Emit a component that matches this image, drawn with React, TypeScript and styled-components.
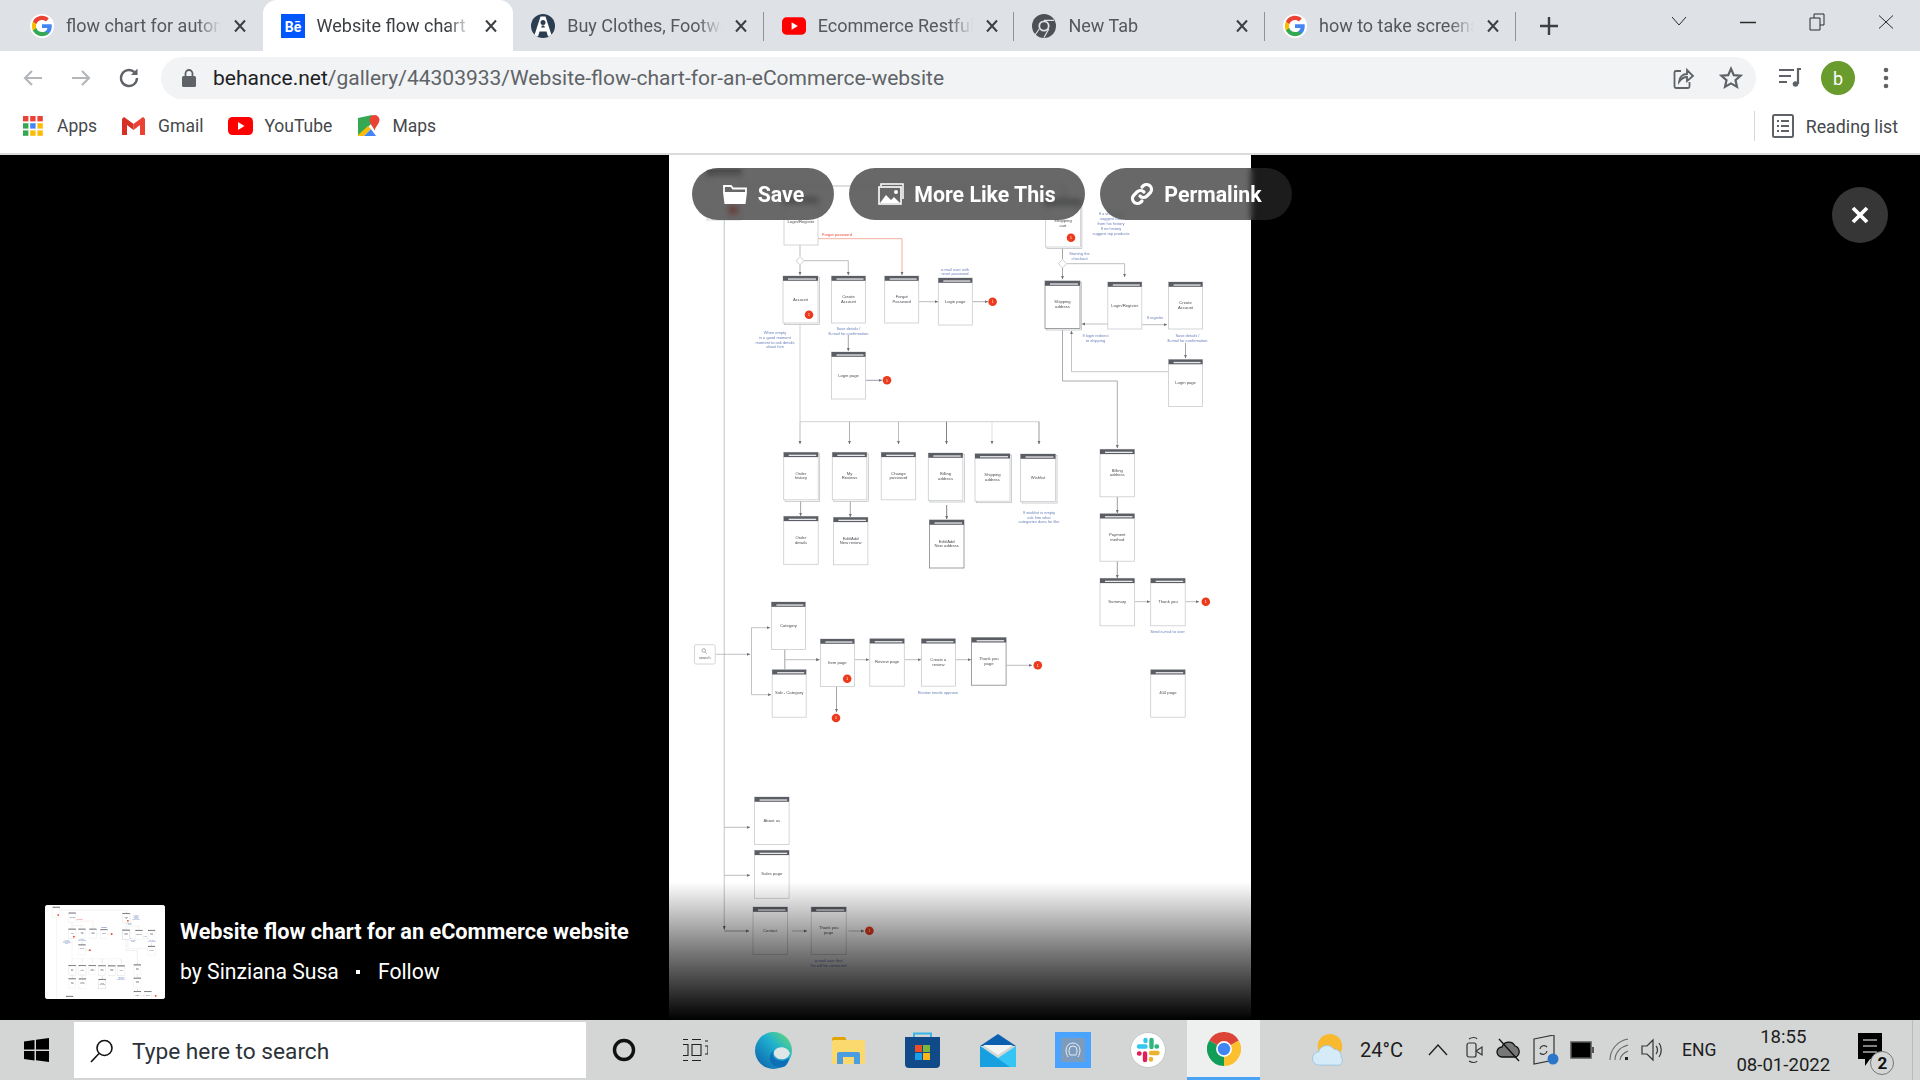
import React from "react";
import styled, { createGlobalStyle } from "styled-components";

const Global = createGlobalStyle`
  html, body { margin: 0; padding: 0; background: #000; }
  * { box-sizing: border-box; }
  body { font-family: Roboto, "Liberation Sans", sans-serif; }
`;

const Page = styled.div`
  width: 1920px; height: 1080px; display: flex; flex-direction: column; overflow: hidden; position: relative;
`;
const TabStrip = styled.div`
  height: 51px; background: #dee1e6; display: flex; align-items: center; padding-left: 12px; flex: none;
`;
const Tab = styled.div<{ $active?: boolean; $sep?: boolean }>`
  width: 250.6px; height: 51px; flex: none; display: flex; align-items: center; padding-left: 18px; gap: 12px;
  position: relative; color: ${p => (p.$active ? "#3c4043" : "#55585c")};
  background: ${p => (p.$active ? "#fff" : "transparent")};
  border-radius: ${p => (p.$active ? "14px 14px 0 0" : "0")};
  &::after {
    content: ""; display: ${p => (p.$sep ? "block" : "none")}; position: absolute; right: 0; top: 12px; width: 1px; height: 29px; background: #8f9397;
  }
`;
const TabIcon = styled.span`
  width: 24px; height: 24px; flex: none; display: flex; align-items: center; justify-content: center;
`;
const TabTitle = styled.span`
  width: 155px; flex: none; font-size: 18px; white-space: nowrap; overflow: hidden;
  mask-image: linear-gradient(to right, #000 84%, transparent 100%);
`;
const TabClose = styled.svg`
  width: 14px; height: 14px; flex: none; stroke: #3c4043; stroke-width: 2; fill: none;
`;
const NewTab = styled.svg`
  width: 24px; height: 24px; margin-left: 21px; flex: none; stroke: #3c4043; stroke-width: 2.4; fill: none;
`;
const WinControls = styled.div`
  margin-left: auto; display: flex; height: 44px; align-self: flex-start; flex: none;
`;
const WinBtn = styled.div`
  width: 69px; height: 44px; display: flex; align-items: center; justify-content: center;
  svg { fill: none; stroke: #2a2a2a; stroke-width: 1; width: 18px; height: 18px; }
`;
const Toolbar = styled.div`
  height: 51px; background: #fff; display: flex; align-items: center; padding: 3px 0 0 9px; flex: none;
`;
const NavBtn = styled.div`
  width: 48px; height: 48px; flex: none; display: flex; align-items: center; justify-content: center;
`;
const Address = styled.div`
  width: 1595px; height: 42px; margin-left: 8px; margin-right: 10px; border-radius: 21px; background: #f1f3f4; display: flex; align-items: center;
  padding-left: 21px; padding-right: 1px; flex: none;
`;
const UrlText = styled.div`
  margin-left: 17px; font-size: 21px; color: #5f6368; white-space: nowrap; flex: 1;
  b { font-weight: 400; color: #202124; }
`;
const AddrIcon = styled.span`
  width: 48px; display: flex; justify-content: center; align-items: center; flex: none;
`;
const Avatar = styled.div`
  width: 34px; height: 34px; border-radius: 50%; background: #6a9c2d; color: #fff; font-size: 18px;
  display: flex; align-items: center; justify-content: center;
`;
const Bookmarks = styled.div`
  height: 51px; background: #fff; display: flex; align-items: center; padding: 0 0 3px 23px; flex: none; color: #45484c; font-size: 17.5px;
`;
const Bookmark = styled.div<{ $ml?: number; $gap: number }>`
  display: flex; align-items: center; gap: ${p => p.$gap}px; margin-left: ${p => p.$ml ?? 0}px; flex: none;
`;
const ReadingList = styled.div`
  margin-left: auto; margin-right: 22px; display: flex; align-items: center; gap: 12px; border-left: 1px solid #d5d7da; height: 30px; padding-left: 17px; flex: none;
  font-size: 17.8px;
`;
const Divider = styled.div`
  height: 2px; background: #dcdcdc; flex: none;
`;
const Stage = styled.div`
  flex: 1; position: relative; background: #000; display: flex; justify-content: center; overflow: hidden;
`;
const ChartBox = styled.div`
  width: 582px; height: 865px; background: #fff; flex: none; display: flex;
`;
const Fade = styled.div`
  position: absolute; left: 0; right: 0; bottom: 0; height: 138px;
  background: linear-gradient(to bottom, rgba(0,0,0,0), rgba(0,0,0,.5) 48%, #000 100%);
`;
const Actions = styled.div`
  position: absolute; top: 13px; left: 692px; display: flex; gap: 15px; align-items: center;
`;
const ActionBtn = styled.div<{ $w: number }>`
  width: ${p => p.$w}px; height: 52px; border-radius: 26px; background: rgba(40,40,40,.7); backdrop-filter: blur(3px);
  display: flex; align-items: center; justify-content: center; gap: 10px; color: #fff; font-weight: 700; font-size: 21.3px;
`;
const CloseBtn = styled.div`
  position: absolute; left: 1832px; top: 32px; width: 56px; height: 56px; border-radius: 50%; background: #363636;
  display: flex; align-items: center; justify-content: center;
`;
const Caption = styled.div`
  position: absolute; left: 45px; top: 750px; display: flex; gap: 15px; align-items: center; color: #fff;
`;
const Thumb = styled.div`
  width: 120px; height: 94px; background: #fff; border-radius: 3px; overflow: hidden; flex: none; display: flex;
`;
const CapText = styled.div`
  display: flex; flex-direction: column; gap: 14px;
`;
const CapTitle = styled.div`
  font-size: 21.7px; font-weight: 700; line-height: 26px; white-space: nowrap;
`;
const CapSub = styled.div`
  font-size: 21.2px; line-height: 26px; display: flex; align-items: center; white-space: nowrap;
  i { width: 4px; height: 4px; background: #fff; margin: 0 18px 0 17px; display: block; }
`;
const Taskbar = styled.div`
  height: 60px; background: #d3d6d5; display: flex; align-items: center; flex: none; position: relative;
`;
const Start = styled.div`
  width: 74px; padding-right: 2px; display: flex; justify-content: center; flex: none;
`;
const SearchBox = styled.div`
  width: 512px; height: 56px; background: #fff; display: flex; align-items: center; padding: 2px 0 0 16px; gap: 18px; flex: none;
  color: #2c3238; font-size: 22.7px;
`;
const Slot = styled.div<{ $w?: number; $ml?: number }>`
  width: ${p => p.$w ?? 60}px; margin-left: ${p => p.$ml ?? 0}px; flex: none; display: flex; align-items: center; justify-content: center; height: 60px;
`;
const ActiveSlot = styled(Slot)`
  background: #eef0ef; border-bottom: 3px solid #4aa3f5;
`;
const AppSquare = styled.div`
  width: 36px; height: 36px; background: #4aa3ff; display: flex; align-items: center; justify-content: center;
`;
const AppInner = styled.div`
  width: 24px; height: 24px; background: #7d9cbd; display: flex; align-items: center; justify-content: center;
`;
const TrayText = styled.div<{ $ml: number; $fs?: number }>`
  margin-left: ${p => p.$ml}px; font-size: ${p => p.$fs ?? 20}px; color: #1d1d1d; flex: none; white-space: nowrap;
`;
const Clock = styled.div`
  margin-left: 20px; padding-top: 2px; width: 94px; display: flex; flex-direction: column; align-items: center; gap: 7px; font-size: 18.6px; color: #1d1d1d; flex: none; line-height: 21px;
`;
const Notify = styled.div`
  position: relative; width: 24px; height: 34px; margin-left: 28px; flex: none;
`;
const NotifyBadge = styled.div`
  position: absolute; left: 12px; top: 18px; width: 24px; height: 24px; border-radius: 50%; background: #d3d6d5; border: 1px solid #777;
  font-size: 17px; font-weight: 700; display: flex; align-items: center; justify-content: center; color: #111;
`;
const EdgeLine = styled.div`
  position: absolute; right: 7px; top: 0; bottom: 0; width: 1px; background: #b9bcbb;
`;

const G = ({ s = 24 }: { s?: number }) => (
  <svg width={s} height={s} viewBox="-1 -1 26 26">
    <circle cx="12" cy="12" r="13" fill="#fff" />
    <path fill="#4285F4" d="M22.56 12.25c0-.78-.07-1.53-.2-2.25H12v4.26h5.92c-.26 1.37-1.04 2.53-2.21 3.31v2.77h3.57c2.08-1.92 3.28-4.74 3.28-8.09z" />
    <path fill="#34A853" d="M12 23c2.97 0 5.46-.98 7.28-2.66l-3.57-2.77c-.98.66-2.23 1.06-3.71 1.06-2.86 0-5.29-1.93-6.16-4.53H2.18v2.84C3.99 20.53 7.7 23 12 23z" />
    <path fill="#FBBC05" d="M5.84 14.09c-.22-.66-.35-1.36-.35-2.09s.13-1.43.35-2.09V7.07H2.18C1.43 8.55 1 10.22 1 12s.43 3.45 1.18 4.93l3.66-2.84z" />
    <path fill="#EA4335" d="M12 5.38c1.62 0 3.06.56 4.21 1.64l3.15-3.15C17.45 2.09 14.97 1 12 1 7.7 1 3.99 3.47 2.18 7.07l3.66 2.84c.87-2.6 3.3-4.53 6.16-4.53z" />
  </svg>
);
const BeIcon = () => (
  <svg width="24" height="24" viewBox="0 0 24 24">
    <rect width="24" height="24" fill="#0057ff" />
    <text x="12" y="17.5" textAnchor="middle" fill="#fff" fontFamily="Roboto" fontWeight="700" fontSize="14">Bē</text>
  </svg>
);
const AnthroIcon = () => (
  <svg width="24" height="24" viewBox="0 0 24 24">
    <circle cx="12" cy="12" r="12" fill="#2b3d50" />
    <path fill="#fff" fillRule="evenodd" d="M9.5 2.5h5L20.5 21l-3.5 1.5-1.500-5h-7l-1.500 5L3.500 21zM12 6a2.500 2.500 0 0 0 0 5 2.500 2.500 0 0 0 0-5zM10 13.500h4l-1-2h-2z" />
  </svg>
);
const YT = ({ w = 25, h = 18 }: { w?: number; h?: number }) => (
  <svg width={w} height={h} viewBox="0 0 25 18">
    <rect width="25" height="18" rx="4.5" fill="#f00" />
    <path fill="#fff" d="M10 5l6.5 4-6.5 4z" />
  </svg>
);
const ChromeMono = () => (
  <svg width="24" height="24" viewBox="0 0 24 24">
    <circle cx="12" cy="12" r="12" fill="#4d5054" />
    <circle cx="12" cy="12" r="5.6" fill="#dee1e6" />
    <circle cx="12" cy="12" r="3.8" fill="#4d5054" />
    <path d="M12 6.4h10M7.2 15l-4.8 7M16.8 15L12 23.5" stroke="#dee1e6" strokeWidth="1.2" fill="none" />
  </svg>
);
const ChromeLogo = () => (
  <svg width="34" height="34" viewBox="0 0 24 24">
    <path fill="#db4437" d="M12 12L1.6 6A12 12 0 0 1 22.4 6z" />
    <path fill="#0f9d58" d="M12 12L1.6 6A12 12 0 0 0 12 24z" />
    <path fill="#fbc02d" d="M12 12L12 24A12 12 0 0 0 22.4 6z" />
    <circle cx="12" cy="12" r="5.6" fill="#fff" />
    <circle cx="12" cy="12" r="4.4" fill="#4285f4" />
  </svg>
);

const X = () => (
  <TabClose viewBox="0 0 14 14"><path d="M2 1.5l10 11M12 1.5l-10 11" /></TabClose>
);

const tabs = [
  { icon: <G />, title: "flow chart for automation" },
  { icon: <BeIcon />, title: "Website flow chart for an", active: true },
  { icon: <AnthroIcon />, title: "Buy Clothes, Footwear", sep: true },
  { icon: <YT />, title: "Ecommerce Restful API", sep: true },
  { icon: <ChromeMono />, title: "New Tab", sep: true },
  { icon: <G />, title: "how to take screenshot", sep: true },
];

type N = { x: number; y: number; w: number; h: number; t: string[]; st?: boolean; dark?: boolean };
const nodes: N[] = [
  { x: 707, y: 170, w: 34, h: 50, t: [] },
  { x: 784, y: 198, w: 34, h: 47, t: ["Login/Register"] },
  { x: 783, y: 276, w: 35, h: 47, t: ["Account"], st: true },
  { x: 831.5, y: 276, w: 34, h: 47, t: ["Create", "Account"] },
  { x: 884.7, y: 276, w: 34, h: 47, t: ["Forgot", "Password"] },
  { x: 938.3, y: 278, w: 34, h: 47, t: ["Login page"] },
  { x: 831.5, y: 352, w: 34, h: 47, t: ["Login page"] },
  { x: 1045.4, y: 200, w: 35, h: 47, t: ["Shopping", "cart"], st: true },
  { x: 1045, y: 281, w: 35, h: 47.5, t: ["Shipping", "address"], st: true, dark: true },
  { x: 1107.8, y: 282, w: 34, h: 47, t: ["Login/Register"] },
  { x: 1168.6, y: 282, w: 34, h: 47, t: ["Create", "Account"] },
  { x: 1168.6, y: 359.5, w: 34, h: 47, t: ["Login page"] },
  { x: 783.7, y: 452.3, w: 34.5, h: 47.5, t: ["Order", "history"], st: true },
  { x: 832.3, y: 452.3, w: 34.5, h: 47.5, t: ["My", "Reviews"], st: true },
  { x: 881.2, y: 452.3, w: 34.5, h: 47.5, t: ["Change", "password"] },
  { x: 928.3, y: 453, w: 34.5, h: 47.5, t: ["Billing", "address"], st: true },
  { x: 975, y: 453.7, w: 35, h: 47.5, t: ["Shipping", "address"], st: true },
  { x: 1020.5, y: 454, w: 35, h: 47.5, t: ["Wishlist"], st: true },
  { x: 1100, y: 449.3, w: 34.5, h: 47.5, t: ["Billing", "address"] },
  { x: 1100, y: 513.7, w: 34.5, h: 47.5, t: ["Payment", "method"] },
  { x: 1100, y: 578.3, w: 34.5, h: 47.5, t: ["Summary"] },
  { x: 1150.7, y: 578.3, w: 34.5, h: 47.5, t: ["Thank you"] },
  { x: 783.7, y: 516.3, w: 34.5, h: 48, t: ["Order", "details"] },
  { x: 833.4, y: 517.3, w: 34.5, h: 47.5, t: ["Edit/Add", "New review"] },
  { x: 929.5, y: 520, w: 34.5, h: 48, t: ["Edit/Add", "New address"], dark: true },
  { x: 771.4, y: 602, w: 34, h: 47.5, t: ["Category"] },
  { x: 772.2, y: 669.7, w: 34, h: 47.5, t: ["Sub - Category"] },
  { x: 820.4, y: 639, w: 34, h: 47.5, t: ["Item page"] },
  { x: 869.8, y: 638.7, w: 34.5, h: 47.5, t: ["Review page"] },
  { x: 921.4, y: 638.7, w: 34, h: 47.5, t: ["Create a", "review"] },
  { x: 971.6, y: 637.7, w: 34.5, h: 47.5, t: ["Thank you", "page"], dark: true },
  { x: 1150.7, y: 669.7, w: 34.5, h: 47.5, t: ["404 page"] },
  { x: 754.6, y: 797, w: 34.5, h: 47.5, t: ["About us"] },
  { x: 754.6, y: 850.3, w: 34.5, h: 48, t: ["Sales page"] },
  { x: 753, y: 907, w: 34.5, h: 47.5, t: ["Contact"] },
  { x: 811.2, y: 907, w: 35, h: 47.5, t: ["Thank you", "page"] },
];

const lines: { d: string; c?: string; w?: number; noArrow?: boolean }[] = [
  { d: "M724.3 220V930", c: "#cfd1d3", w: 1.3, noArrow: true },
  { d: "M741 186H1064V198", c: "#a9acb0" },
  { d: "M800 245V256", c: "#a9acb0", noArrow: true },
  { d: "M800 265V275", c: "#9a9da2" },
  { d: "M804 260.7H848.3V275", c: "#a9acb0" },
  { d: "M818 238.7H902V275", c: "#f39a88" },
  { d: "M919 301.7H938", c: "#a9acb0" },
  { d: "M972.5 301.7H988", c: "#9a9da2" },
  { d: "M800 323V421.7", c: "#c3c5c8", noArrow: true },
  { d: "M800 421.7H1039", c: "#c3c5c8", noArrow: true },
  { d: "M800 421.7V444", c: "#a9acb0" },
  { d: "M849.5 421.7V444", c: "#9a9da2" },
  { d: "M898.5 421.7V444", c: "#a9acb0" },
  { d: "M946.5 421.7V444", c: "#62656b" },
  { d: "M992 421.7V444", c: "#d5d7d9" },
  { d: "M1039 421.7V444", c: "#7d8085" },
  { d: "M848.3 335V351", c: "#8a8d92" },
  { d: "M866 380.3H882", c: "#80838a" },
  { d: "M1062.5 247V259", c: "#8a8d92", noArrow: true },
  { d: "M1062.5 268V279", c: "#8a8d92" },
  { d: "M1067 263.7H1124.6V277", c: "#a9acb0" },
  { d: "M1108 324H1082", c: "#b0b3b6" },
  { d: "M1142 324.7H1167", c: "#a9acb0" },
  { d: "M1185.5 343V358", c: "#8a8d92" },
  { d: "M1168 371.7H1071.5V331", c: "#b5b8ba" },
  { d: "M1062.5 329V381H1117.3V448", c: "#94979c" },
  { d: "M1117.3 497V513", c: "#80838a" },
  { d: "M1117.3 561V578", c: "#80838a" },
  { d: "M1135 601.7H1150", c: "#a9acb0" },
  { d: "M1185.5 601.7H1199", c: "#a9acb0" },
  { d: "M800.6 501V516", c: "#8a8d92" },
  { d: "M850.3 501V517", c: "#8a8d92" },
  { d: "M946.7 505V519", c: "#5b5e64" },
  { d: "M715.5 654.3H750", c: "#b0b3b6" },
  { d: "M751.5 627.7V694.7", c: "#b0b3b6", noArrow: true },
  { d: "M751.5 627.7H770", c: "#b0b3b6" },
  { d: "M751.5 694.7H771", c: "#b0b3b6" },
  { d: "M784.8 649V670", c: "#8a8d92", noArrow: true },
  { d: "M785 659.7H819.5", c: "#a9acb0" },
  { d: "M855 659.7H869", c: "#a9acb0" },
  { d: "M904.5 659.7H921", c: "#a9acb0" },
  { d: "M956 659.7H971", c: "#a9acb0" },
  { d: "M1006.5 665.3H1032", c: "#a9acb0" },
  { d: "M836.5 686V712", c: "#8a8d92" },
  { d: "M724.3 827.3H750", c: "#a9acb0" },
  { d: "M724.3 875.3H750", c: "#a9acb0" },
  { d: "M724.3 931H749", c: "#8a8d92" },
  { d: "M792 931H807", c: "#a9acb0" },
  { d: "M848.5 931H864", c: "#a9acb0" },
];

const badges = [
  [733, 210], [809, 314.7], [992.6, 301.7], [887, 380.3], [1071, 237.7], [1205.8, 601.7],
  [847.2, 678.7], [836, 718], [1037.8, 665.3], [869.4, 930.7],
];

const notes: { x: number; y: number; t: string; c?: string }[] = [
  { x: 775, y: 334, t: "When empty" }, { x: 775, y: 339, t: "is a good moment" }, { x: 775, y: 343.5, t: "moment to ask details" }, { x: 775, y: 348, t: "about him" },
  { x: 848.4, y: 330, t: "Save details /" }, { x: 848.4, y: 334.5, t: "E-mail for confirmation" },
  { x: 955, y: 270.5, t: "e-mail user with" }, { x: 955, y: 275, t: "reset password" },
  { x: 1111, y: 214.5, t: "If a visitor has" }, { x: 1111, y: 219.5, t: "suggest cart" }, { x: 1111, y: 224.5, t: "from his history" }, { x: 1111, y: 229.5, t: "If no history" }, { x: 1111, y: 234.5, t: "suggest top products" },
  { x: 1079.5, y: 255, t: "Starting the" }, { x: 1079.5, y: 259.5, t: "checkout" },
  { x: 1095.5, y: 337, t: "If login redirect" }, { x: 1095.5, y: 341.5, t: "to shipping" },
  { x: 1155, y: 318.5, t: "If register" },
  { x: 1187.4, y: 337, t: "Save details /" }, { x: 1187.4, y: 341.5, t: "E-mail for confirmation" },
  { x: 1039, y: 513.8, t: "If wishlist is empty" }, { x: 1039, y: 518.5, t: "ask him what" }, { x: 1039, y: 523.2, t: "categories does he like" },
  { x: 1167.5, y: 633.2, t: "Send e-mail to user" },
  { x: 938, y: 693.8, t: "Review needs approve" },
  { x: 828.8, y: 961.8, t: "e-mail user that" }, { x: 828.8, y: 966.5, t: "he will be contacted" },
  { x: 837, y: 236, t: "Forgot password", c: "#ee4b36" },
];

const Chart = ({ id, viewBox, blur, maxY }: { id: string; viewBox: string; blur: number; maxY?: number }) => {
  const limit = maxY ?? 2000;
  return (
    <svg width="100%" height="100%" viewBox={viewBox} preserveAspectRatio="xMidYMin slice">
      <defs>
        <filter id={`${id}b`} x="0" y="0" width="100%" height="100%"><feGaussianBlur stdDeviation={blur} /></filter>
        <marker id={`${id}a`} markerUnits="userSpaceOnUse" markerWidth="4" markerHeight="4" refX="3.4" refY="2" orient="auto">
          <path d="M0 .4L3.6 2 0 3.6z" fill="#6d7076" />
        </marker>
      </defs>
      <g filter={`url(#${id}b)`} fontFamily="Liberation Sans, sans-serif">
        <rect x="669" y="100" width="582" height="1000" fill="#fff" />
        {lines.map((l, i) => (
          <path key={i} d={l.d} fill="none" stroke={l.c ?? "#a9acb0"} strokeWidth={l.w ?? 0.8} markerEnd={l.noArrow ? undefined : `url(#${id}a)`} />
        ))}
        <path d="M800 256.5l4 4.2-4 4.2-4-4.2zM1062.5 259.5l4 4.2-4 4.2-4-4.2z" fill="#fff" stroke="#a9acb0" strokeWidth=".6" />
        <path d="M723 926l1.3 4 1.3-4z" fill="#55585c" />
        {nodes.filter(n => n.y < limit).map((n, i) => (
          <g key={i}>
            {n.st && <rect x={n.x + 1.5} y={n.y + 1.5} width={n.w} height={n.h} fill="#fff" stroke="#b5b8bb" strokeWidth=".7" />}
            <rect x={n.x} y={n.y} width={n.w} height={n.h} fill="#fff" stroke={n.dark ? "#85888d" : "#c9cbce"} strokeWidth=".8" />
            <rect x={n.x} y={n.y} width={n.w} height="4.8" fill="#5a5d64" />
            <rect x={n.x + 5} y={n.y + 2.4} width={n.w - 7} height="1.3" fill="#e8e9ea" />
            {n.t.map((s, j) => (
              <text key={j} x={n.x + n.w / 2} y={n.y + n.h / 2 + 1 + (j - (n.t.length - 1) / 2) * 4.8} textAnchor="middle" fontSize="4.2" fill="#4a4d52">{s}</text>
            ))}
          </g>
        ))}
        {!maxY && (
          <g>
            <rect x="694.5" y="644.7" width="20.7" height="19.3" rx="1.5" fill="#fff" stroke="#c9cbce" strokeWidth=".8" />
            <circle cx="703.8" cy="650.5" r="1.8" fill="none" stroke="#777" strokeWidth=".6" />
            <path d="M705 652l1.8 1.8" stroke="#777" strokeWidth=".6" />
            <text x="704.8" y="658.7" textAnchor="middle" fontSize="3.8" fill="#555">search</text>
          </g>
        )}
        {notes.filter(n => n.y < limit).map((n, i) => (
          <text key={i} x={n.x} y={n.y} textAnchor="middle" fontSize="4" fill={n.c ?? "#6d82ba"}>{n.t}</text>
        ))}
        {badges.filter(b => b[1] < limit).map(([x, y], i) => (
          <g key={i}>
            <circle cx={x} cy={y} r="4.3" fill="#ec3a1c" />
            {!maxY && <text x={x} y={y + 1.2} textAnchor="middle" fontSize="3.4" fill="#fff">1</text>}
          </g>
        ))}
      </g>
    </svg>
  );
};

const Arrow = ({ flip, c }: { flip?: boolean; c: string }) => (
  <svg width="22" height="22" viewBox="0 0 22 22" fill="none" stroke={c} strokeWidth="2.2" style={flip ? { transform: "scaleX(-1)" } : undefined}>
    <path d="M20 11H3M10 4l-7 7 7 7" />
  </svg>
);

const FolderIcon = () => (
  <svg width="26" height="22" viewBox="0 0 26 22">
    <path fill="none" stroke="#fff" strokeWidth="1.8" d="M2 9V3h7l2 2.5h13V9" />
    <path fill="#fff" d="M1 9h24l-1.5 12H2.5z" />
  </svg>
);
const ImageIcon = () => (
  <svg width="26" height="22" viewBox="0 0 26 22">
    <path fill="none" stroke="#fff" strokeWidth="1.5" d="M3 3V1h22v15" />
    <rect x="1" y="4" width="22" height="17" fill="none" stroke="#fff" strokeWidth="1.6" />
    <path fill="#fff" d="M2 20l6-8 5 5 3-3 6 6z" />
    <circle cx="18" cy="9" r="2" fill="#fff" />
  </svg>
);
const LinkIcon = () => (
  <svg width="24" height="24" viewBox="0 0 24 24" fill="none" stroke="#fff" strokeWidth="3.2" strokeLinecap="round">
    <path d="M10 14a5 5 0 0 0 7 0l3.5-3.5a5 5 0 0 0-7-7L12 5" />
    <path d="M14 10a5 5 0 0 0-7 0l-3.500 3.500a5 5 0 0 0 7 7L12 19" />
  </svg>
);

export default function App() {
  return (
    <Page>
      <Global />
      <TabStrip>
        {tabs.map(t => (
          <Tab key={t.title} $active={t.active} $sep={t.sep}>
            <TabIcon>{t.icon}</TabIcon>
            <TabTitle>{t.title}</TabTitle>
            <X />
          </Tab>
        ))}
        <NewTab viewBox="0 0 24 24"><path d="M12 3v18M3 12h18" /></NewTab>
        <WinControls>
          <WinBtn><svg viewBox="0 0 18 18"><path d="M2 4l7 8 7-8" /></svg></WinBtn>
          <WinBtn><svg viewBox="0 0 18 18"><path d="M1 9.5h16" strokeWidth="1.5" /></svg></WinBtn>
          <WinBtn><svg viewBox="0 0 18 18"><path d="M2 5h10v12H2zM6 5V1h10v11h-4" /></svg></WinBtn>
          <WinBtn><svg viewBox="0 0 18 18"><path d="M2 2.5l14 13M16 2.5L2 15.5" /></svg></WinBtn>
        </WinControls>
      </TabStrip>
      <Toolbar>
        <NavBtn><Arrow c="#b4b7ba" /></NavBtn>
        <NavBtn><Arrow c="#b4b7ba" flip /></NavBtn>
        <NavBtn>
          <svg width="24" height="24" viewBox="0 0 24 24" fill="none" stroke="#5f6368" strokeWidth="2.4">
            <path d="M20 12a8 8 0 1 1-2.5-5.800" />
            <path d="M20.5 2.5v6.5h-6.500z" fill="#5f6368" stroke="none" />
          </svg>
        </NavBtn>
        <Address>
          <svg width="14" height="18" viewBox="0 0 14 18">
            <rect x="0" y="7" width="14" height="11" rx="1.5" fill="#5f6368" />
            <path d="M3.5 7V4.5a3.500 3.500 0 0 1 7 0V7" fill="none" stroke="#5f6368" strokeWidth="1.8" />
          </svg>
          <UrlText><b>behance.net</b>/gallery/44303933/Website-flow-chart-for-an-eCommerce-website</UrlText>
          <AddrIcon>
            <svg width="24" height="24" viewBox="0 0 24 24" fill="none" stroke="#5f6368" strokeWidth="1.8">
              <path d="M10 5H5a1.5 1.5 0 0 0-1.5 1.5v14A1.5 1.5 0 0 0 5 22h12a1.5 1.5 0 0 0 1.5-1.5V16" />
              <path d="M8 16c0-5 4-8 8-8V4l6 6-6 5v-4c-3 0-6 2-8 5z" />
            </svg>
          </AddrIcon>
          <AddrIcon>
            <svg width="24" height="24" viewBox="0 0 24 24" fill="none" stroke="#5f6368" strokeWidth="2.2">
              <path d="M12 2.8l2.8 6.300 6.700.6-5 4.500 1.500 6.700-6-3.500-6 3.500 1.500-6.700-5-4.500 6.700-.6z" />
            </svg>
          </AddrIcon>
        </Address>
        <NavBtn>
          <svg width="24" height="24" viewBox="0 0 24 24" fill="none" stroke="#5f6368" strokeWidth="2.2">
            <path d="M1 4h15M1 10h12M1 16h8M20 18V3h3" />
            <circle cx="17.5" cy="18" r="2.8" fill="#5f6368" stroke="none" />
          </svg>
        </NavBtn>
        <NavBtn><Avatar>b</Avatar></NavBtn>
        <NavBtn>
          <svg width="6" height="22" viewBox="0 0 6 22" fill="#5f6368">
            <circle cx="3" cy="3" r="2.3" /><circle cx="3" cy="11" r="2.3" /><circle cx="3" cy="19" r="2.3" />
          </svg>
        </NavBtn>
      </Toolbar>
      <Bookmarks>
        <Bookmark $gap={14}>
          <svg width="20" height="20" viewBox="0 0 20 20">
            {[0, 1, 2].flatMap(r => [0, 1, 2].map(c => (
              <rect key={`${r}${c}`} x={c * 7.2} y={r * 7.2} width="5.4" height="5.4"
                fill={[["#ea4335", "#ea4335", "#ea4335"], ["#34a853", "#4285f4", "#fbbc05"], ["#34a853", "#fbbc05", "#fbbc05"]][r][c]} />
            )))}
          </svg>
          Apps
        </Bookmark>
        <Bookmark $ml={25} $gap={13}>
          <svg width="23" height="18" viewBox="0 0 23 18">
            <path d="M0 2v16h5V8l6.5 5L18 8v10h5V2l-2-2-9.5 7L2 0z" fill="#dadce0" />
            <path d="M0 18V2l2-2 9.5 7v6L5 8v10z" fill="#d93025" />
            <path d="M23 18V2l-2-2-9.5 7v6L18 8v10z" fill="#ea4335" />
          </svg>
          Gmail
        </Bookmark>
        <Bookmark $ml={25} $gap={11}>
          <YT />
          YouTube
        </Bookmark>
        <Bookmark $ml={26} $gap={12}>
          <svg width="22" height="22" viewBox="0 0 22 22">
            <path fill="#34a853" d="M0 3l14-3v8L3 19l-3 1z" />
            <path fill="#fbbc05" d="M0 20l10-9 3 3-7 7H0z" />
            <path fill="#4285f4" d="M6 21l7-7 5 7z" />
            <path fill="#ea4335" d="M16.5 0a5 5 0 0 1 5 5c0 3.500-5 8-5 11-.5-3-5-7.500-5-11a5 5 0 0 1 5-5z" />
          </svg>
          Maps
        </Bookmark>
        <ReadingList>
          <svg width="22" height="24" viewBox="0 0 22 24" fill="none" stroke="#5f6368" strokeWidth="2">
            <rect x="1" y="1" width="20" height="22" rx="1.5" />
            <path d="M5 7h2M9 7h8M5 12h2M9 12h8M5 17h2M9 17h8" />
          </svg>
          Reading list
        </ReadingList>
      </Bookmarks>
      <Divider />
      <Stage>
        <ChartBox>
          <Chart id="m" viewBox="669 155 582 865" blur={0.5} />
        </ChartBox>
        <Fade />
        <Actions>
          <ActionBtn $w={142}><FolderIcon />Save</ActionBtn>
          <ActionBtn $w={236}><ImageIcon />More Like This</ActionBtn>
          <ActionBtn $w={192}><LinkIcon />Permalink</ActionBtn>
        </Actions>
        <CloseBtn>
          <svg width="18" height="18" viewBox="0 0 18 18" stroke="#fff" strokeWidth="3.8" fill="none"><path d="M2 2l14 14M16 2L2 16" /></svg>
        </CloseBtn>
        <Caption>
          <Thumb><Chart id="t" viewBox="669 161 582 456" blur={3} maxY={610} /></Thumb>
          <CapText>
            <CapTitle>Website flow chart for an eCommerce website</CapTitle>
            <CapSub>by Sinziana Susa<i />Follow</CapSub>
          </CapText>
        </Caption>
      </Stage>
      <Taskbar>
        <Start>
          <svg width="25" height="24" viewBox="0 0 25 24" fill="#000">
            <path d="M0 3.5l10.5-1.5v9.5H0zM12 1.8L25 0v11.5H12zM0 13h10.5v9.5L0 21zM12 13h13v11l-13-1.800z" />
          </svg>
        </Start>
        <SearchBox>
          <svg width="24" height="24" viewBox="0 0 24 24" fill="none" stroke="#111" strokeWidth="1.6">
            <circle cx="14.5" cy="9" r="7.5" /><path d="M9 14.5L1 23" />
          </svg>
          Type here to search
        </SearchBox>
        <Slot $ml={8}>
          <svg width="24" height="24" viewBox="0 0 24 24" fill="none" stroke="#111" strokeWidth="3.4"><circle cx="12" cy="12" r="9.5" /></svg>
        </Slot>
        <Slot $ml={11}>
          <svg width="25" height="24" viewBox="0 0 25 24" fill="none" stroke="#222" strokeWidth="1.1">
            <path d="M0 1.5h5M9 1.5h9M0 22.5h5M9 22.5h9M0 6.5h5v11H0M9 6.5h9v11H9zM22 3h3M22 8h3v8h-3" />
          </svg>
        </Slot>
        <Slot $ml={18}>
          <svg width="37" height="37" viewBox="0 0 36 36">
            <defs>
              <linearGradient id="eg" x1="1" y1="0" x2="0" y2="1">
                <stop offset="0" stopColor="#6fe06a" /><stop offset=".42" stopColor="#1fb0cf" /><stop offset="1" stopColor="#0b5aa8" />
              </linearGradient>
            </defs>
            <circle cx="18" cy="18" r="18" fill="url(#eg)" />
            <path d="M34 21C32 14 23 13 19 18c-2 4 1 8 6 8.500 4 .3 7-.8 9-5.500z" fill="#dfe6e8" />
            <path d="M33 25c-3 3-8 4-12 2-3-1-5-5-3-9-5 4-5 12 1 15 4 2 8 2 11-.5 2-2 3-5 3-7.500z" fill="#0d6fb8" />
          </svg>
        </Slot>
        <Slot $ml={15}>
          <svg width="33" height="27" viewBox="0 0 33 27">
            <path d="M0 2a2 2 0 0 1 2-2h11l2 4H0z" fill="#e0a400" />
            <rect y="3" width="33" height="24" rx="1.5" fill="#fbd96e" />
            <path fill="#4b9de0" fillRule="evenodd" d="M5 27V17a2 2 0 0 1 2-2h19a2 2 0 0 1 2 2v10h-6v-7H11v7z" />
          </svg>
        </Slot>
        <Slot $ml={14}>
          <svg width="35" height="36" viewBox="0 0 35 36">
            <path d="M9 7V1.5h17V7" fill="none" stroke="#39b5ea" strokeWidth="2" />
            <path d="M0 5h35v27a4 4 0 0 1-4 4H4a4 4 0 0 1-4-4z" fill="#114a88" />
            <rect x="10" y="13" width="7" height="7" fill="#ea4f28" /><rect x="18" y="13" width="7" height="7" fill="#7cb83a" />
            <rect x="10" y="21" width="7" height="7" fill="#1aa0e8" /><rect x="18" y="21" width="7" height="7" fill="#f9b71a" />
          </svg>
        </Slot>
        <Slot $ml={16}>
          <svg width="36" height="33" viewBox="0 0 36 33">
            <path d="M18 0l18 12H0z" fill="#0d5fb0" />
            <path d="M3 11h30L18 21z" fill="#f3f4f4" />
            <path d="M0 12l18 12 18-12v21H0z" fill="#35c5f5" />
            <path d="M0 33V12l30 21z" fill="#189fe0" />
          </svg>
        </Slot>
        <Slot $ml={15}>
          <AppSquare>
            <AppInner>
              <svg width="18" height="18" viewBox="0 0 18 18" fill="none" stroke="#e6eef5" strokeWidth="1">
                <path d="M4 16c-1-2-2-4-2-7a7 7 0 0 1 14 0c0 3-1 5-2 7M6 14c-1-2-1-4-1-5a4 4 0 0 1 8 0c0 1 0 3-1 5z" />
              </svg>
            </AppInner>
          </AppSquare>
        </Slot>
        <Slot $ml={15}>
          <svg width="36" height="36" viewBox="0 0 36 36">
            <circle cx="18" cy="18" r="17.5" fill="#fff" stroke="#c5c7c6" strokeWidth="1" />
            <g strokeWidth="4.4" strokeLinecap="round" fill="none">
              <path d="M15.5 14.5H9M15.5 8v1" stroke="#36c5f0" /><path d="M21.5 8v7M27 14.5h-.5" stroke="#2eb67d" />
              <path d="M21 21h6.500M21 27.500V27" stroke="#ecb22e" /><path d="M15 21.500V28M9 21.500h.5" stroke="#e01e5a" />
            </g>
          </svg>
        </Slot>
        <ActiveSlot $w={73} $ml={9}><ChromeLogo /></ActiveSlot>
        <Slot $w={38} $ml={50}>
          <svg width="34" height="34" viewBox="0 0 36 36">
            <circle cx="19" cy="14" r="13" fill="#f8b92e" />
            <path d="M8 34a7 7 0 0 1-1-14 9 9 0 0 1 16-3 8 8 0 0 1 8 9 5 5 0 0 1-2 8z" fill="#d6ebf8" stroke="#9cc7e6" strokeWidth="1" />
          </svg>
        </Slot>
        <TrayText $ml={12}>24°C</TrayText>
        <Slot $w={20} $ml={25}>
          <svg width="20" height="12" viewBox="0 0 20 12" fill="none" stroke="#222" strokeWidth="1.4"><path d="M1 11l9-10 9 10" /></svg>
        </Slot>
        <Slot $w={20} $ml={17}>
          <svg width="18" height="28" viewBox="0 0 18 28" fill="none" stroke="#333" strokeWidth="1.2">
            <rect x="1" y="7" width="9" height="14" rx="2" /><path d="M10 15l6-4v8l-6-4M3 3c3-2 7-2 8 0M3 25c3 2 7 2 8 0" />
          </svg>
        </Slot>
        <Slot $w={26} $ml={11}>
          <svg width="26" height="24" viewBox="0 0 26 24" fill="#777" stroke="#111" strokeWidth="1.3">
            <path d="M6 19a5 5 0 0 1 0-10 7 7 0 0 1 13-1 6 6 0 0 1 1 11z" /><path d="M3 1l20 22" fill="none" />
          </svg>
        </Slot>
        <Slot $w={26} $ml={11}>
          <svg width="26" height="30" viewBox="0 0 26 30" fill="none" stroke="#333" strokeWidth="1.2">
            <path d="M1 4l20-4v25L1 29zM7 14a4 4 0 0 1 7-2M14 16a4 4 0 0 1-7 2" />
            <circle cx="20" cy="24" r="5.5" fill="#2b76c8" stroke="none" />
          </svg>
        </Slot>
        <Slot $w={24} $ml={11}>
          <svg width="24" height="18" viewBox="0 0 24 18">
            <rect x="1" y="1" width="20" height="16" fill="#000" stroke="#555" strokeWidth="1.5" /><rect x="22" y="6" width="2" height="6" fill="#555" />
          </svg>
        </Slot>
        <Slot $w={20} $ml={15}>
          <svg width="20" height="24" viewBox="0 0 20 24" fill="none" stroke="#666" strokeWidth="1.1">
            <path d="M1 22C1 12 8 3 19 1M6 22c0-7 5-13 13-15M11 22c0-3 3-7 8-9" /><rect x="16" y="19" width="3" height="3" fill="#222" stroke="none" />
          </svg>
        </Slot>
        <Slot $w={24} $ml={12}>
          <svg width="24" height="24" viewBox="0 0 24 24" fill="none" stroke="#333" strokeWidth="1.2">
            <path d="M1 8h5l6-6v20l-6-6H1zM15 8c2 2 2 6 0 8M18 5c3 4 3 10 0 14" />
          </svg>
        </Slot>
        <TrayText $ml={17} $fs={17.5}>ENG</TrayText>
        <Clock><span>18:55</span><span>08-01-2022</span></Clock>
        <Notify>
          <svg width="24" height="34" viewBox="0 0 24 34" fill="#000">
            <path d="M0 0h24v26H12l-5 7v-7H0z" />
            <path d="M5 7h14M5 13h14M5 19h14" stroke="#fff" strokeWidth="1.2" />
          </svg>
          <NotifyBadge>2</NotifyBadge>
        </Notify>
        <EdgeLine />
      </Taskbar>
    </Page>
  );
}
